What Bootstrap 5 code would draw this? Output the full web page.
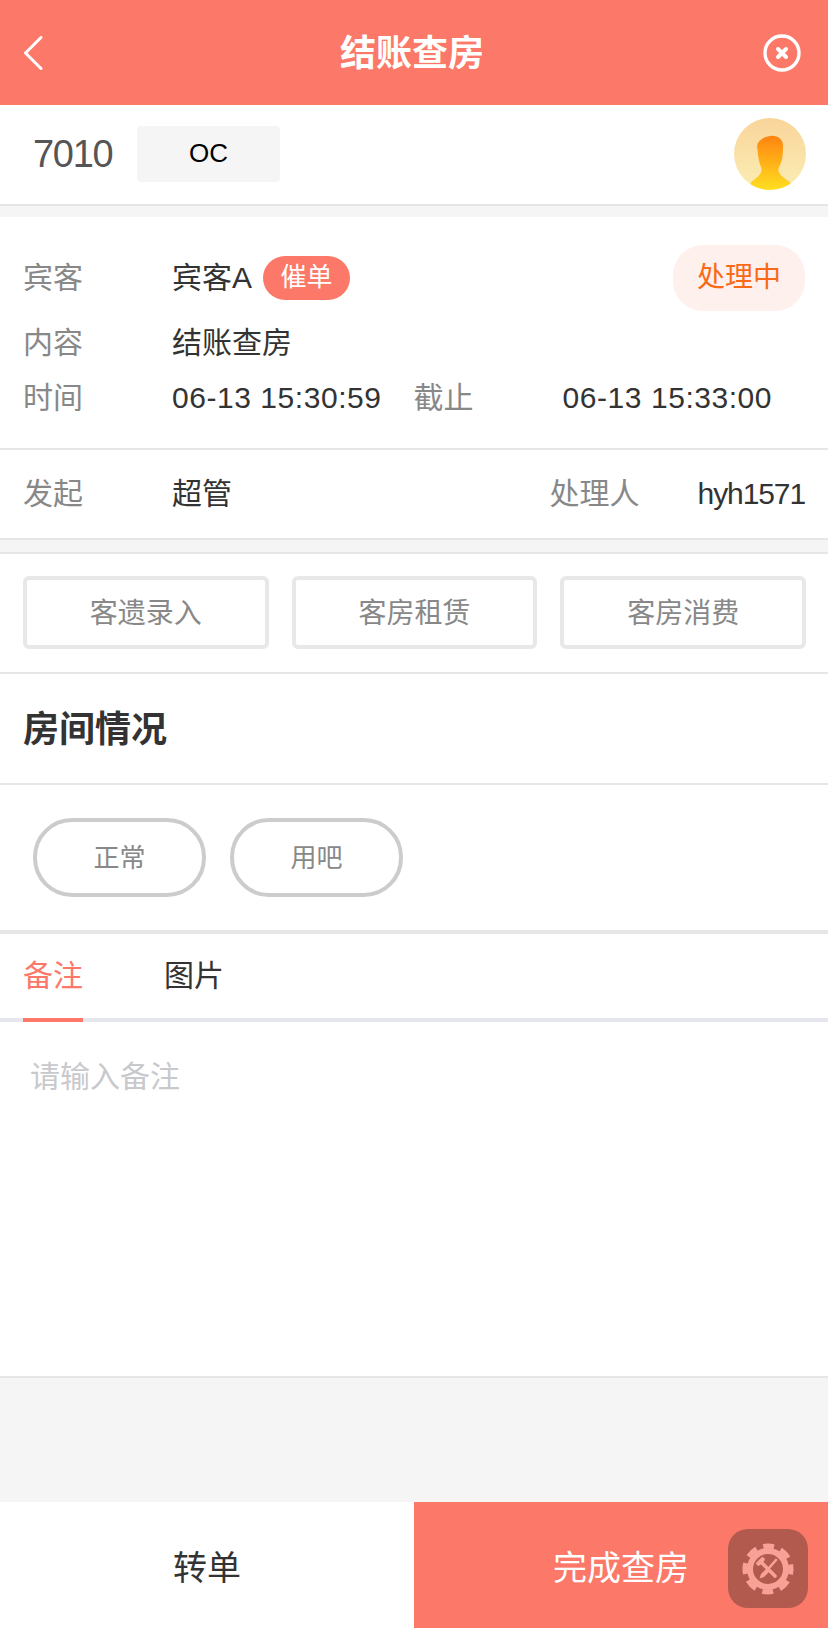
<!DOCTYPE html>
<html lang="zh-CN">

<head>
  <meta charset="UTF-8" />
  <meta name="viewport" content="width=device-width, initial-scale=1.0" />
  <title>结账查房</title>
  <link href="https://cdn.jsdelivr.net/npm/bootstrap@5.3.3/dist/css/bootstrap.min.css" rel="stylesheet">
  <style>
    body {
      font-family: "Liberation Sans", "Noto Sans CJK SC", sans-serif;
      background-color: #f5f5f5;
      color: #333;
      font-size: 30px;
      line-height: 1.2;
    }

    .page {
      height: 1628px;
    }

    .top-bar {
      height: 105px;
      background-color: #fc7969;
      padding: 0 27px 0 23px;
    }

    .top-side {
      width: 60px;
    }

    .top-title {
      font-size: 36px;
      font-weight: 700;
      margin-top: 3px;
    }

    .room-row {
      height: 101px;
      padding: 0 22px 1px 33px;
      border-bottom: 2px solid #e6e6e6;
      margin-bottom: 11px;
    }

    .room-no {
      font-size: 38px;
      letter-spacing: -1.3px;
      color: #555;
      width: 104px;
      margin-top: 2px;
    }

    .room-state {
      width: 143px;
      height: 56px;
      background-color: #f5f5f5;
      border-radius: 4px;
      font-size: 26px;
      color: #000;
    }

    .info-top {
      height: 233px;
      padding: 28px 23px 0;
      border-bottom: 2px solid #e6e6e6;
    }

    .info-line {
      display: flex;
      align-items: center;
    }

    .line-content {
      margin-top: 14px;
    }

    .line-time {
      margin-top: 19px;
    }

    .info-label {
      color: #888;
      width: 149px;
      flex-shrink: 0;
    }

    .time-text {
      letter-spacing: .55px;
    }

    .deadline-label {
      margin-left: 32px;
    }

    .handler-label {
      color: #888;
      margin-left: auto;
      margin-right: 58px;
    }

    .handler-name {
      letter-spacing: -1.1px;
    }

    .tag-urge {
      width: 87px;
      height: 44px;
      margin-left: 11px;
      background-color: #fc7969;
      border-radius: 22px;
      font-size: 26px;
    }

    .tag-status {
      width: 132px;
      height: 66px;
      background-color: #fef0ed;
      border-radius: 30px;
      color: #f96a18;
      font-size: 28px;
    }

    .info-bottom {
      height: 90px;
      padding: 0 23px;
      border-bottom: 2px solid #e6e6e6;
      margin-bottom: 12px;
    }

    .action-row {
      height: 122px;
      padding: 22px 22px 0 23px;
      border-top: 2px solid #e6e6e6;
      border-bottom: 2px solid #e6e6e6;
      gap: 23px;
    }

    .action-btn {
      flex: 1;
      height: 73px;
      padding-top: 3px;
      border: 4px solid #e8e8e8;
      border-radius: 6px;
      color: #888;
      font-size: 28px;
      background-color: #fff;
    }

    .section-title {
      height: 111px;
      padding: 3px 23px 0;
      border-bottom: 2px solid #e6e6e6;
      font-size: 36px;
      font-weight: 700;
    }

    .pill-row {
      height: 149px;
      padding: 33px 33px 0;
      gap: 24px;
      border-bottom: 4px solid #e6e6e6;
    }

    .pill-btn {
      width: 173px;
      height: 79px;
      padding-top: 2px;
      border: 4px solid #ccc;
      border-radius: 39px;
      color: #888;
      font-size: 26px;
      background-color: #fff;
    }

    .tab-row {
      height: 88px;
      padding: 0 23px;
      border-bottom: 4px solid #e6e6ee;
      gap: 81px;
    }

    .tab-item {
      padding-top: 24px;
      height: 88px;
      color: #333;
    }

    .tab-on {
      color: #fc7969;
      border-bottom: 4px solid #fc7969;
      width: 60px;
    }

    .note-box {
      height: 356px;
      border-bottom: 2px solid #e6e6e6;
    }

    .note-box textarea {
      height: 100%;
      padding: 37px 30px;
      font-size: 30px;
      line-height: 1.2;
      resize: none;
      font-family: inherit;
    }

    .note-box textarea::placeholder {
      color: #c8c9cc;
    }

    .foot-bar {
      height: 126px;
    }

    .foot-btn {
      flex: 1;
      font-size: 34px;
      padding-top: 7px;
    }

    .foot-done {
      background-color: #fc7969;
    }

    .float-tool {
      right: 20px;
      bottom: 20px;
      width: 80px;
      height: 79px;
      border-radius: 20px;
      background-color: #b25a4d;
    }
  </style>
</head>

<body>
  <div class="page d-flex flex-column">
    <!-- header -->
    <div class="top-bar d-flex align-items-center justify-content-between text-white flex-shrink-0">
      <div class="top-side d-flex">
        <svg width="20" height="34" viewBox="0 0 20 34">
          <path d="M18 1.5 2.5 17 18 32.5" fill="none" stroke="#fff" stroke-width="3" stroke-linecap="round" stroke-linejoin="round" />
        </svg>
      </div>
      <div class="top-title">结账查房</div>
      <div class="top-side d-flex justify-content-end">
        <svg width="38" height="38" viewBox="0 0 38 38">
          <circle cx="19" cy="19" r="17" fill="none" stroke="#fff" stroke-width="3.4" />
          <path d="M15 15 23 23M23 15 15 23" fill="none" stroke="#fff" stroke-width="4" stroke-linecap="round" />
        </svg>
      </div>
    </div>

    <!-- room -->
    <div class="room-row bg-white d-flex align-items-center flex-shrink-0">
      <div class="room-no">7010</div>
      <div class="room-state d-flex align-items-center justify-content-center">OC</div>
      <svg class="ms-auto" width="72" height="72" viewBox="0 0 72 72">
        <defs>
          <linearGradient id="avatarBg" x1="0" y1="0" x2="0" y2="1">
            <stop offset="0" stop-color="#f9d49a" />
            <stop offset="1" stop-color="#fbeeb4" />
          </linearGradient>
          <linearGradient id="avatarFg" x1="0" y1="0" x2="0" y2="1">
            <stop offset="0" stop-color="#ff8410" />
            <stop offset="1" stop-color="#ffdf20" />
          </linearGradient>
          <clipPath id="avatarClip">
            <circle cx="36" cy="36" r="36" />
          </clipPath>
        </defs>
        <circle cx="36" cy="36" r="36" fill="url(#avatarBg)" />
        <path clip-path="url(#avatarClip)" d="M23 28C24 22 30 19 36 18 44 17 50 22 49 30 49 38 48 44 45 49 43 54 46 58 56 64L58 72H15L17 64C26 58 29 54 27 49 24 42 24 34 23 28Z" fill="url(#avatarFg)" />
      </svg>
    </div>

    <!-- order info -->
    <div class="info-top bg-white flex-shrink-0">
      <div class="info-line">
        <div class="info-label">宾客</div>
        <div>宾客A</div>
        <div class="tag-urge text-white d-flex align-items-center justify-content-center">催单</div>
        <div class="tag-status ms-auto d-flex align-items-center justify-content-center">处理中</div>
      </div>
      <div class="info-line line-content">
        <div class="info-label">内容</div>
        <div>结账查房</div>
      </div>
      <div class="info-line line-time">
        <div class="info-label">时间</div>
        <div class="time-text">06-13 15:30:59</div>
        <div class="info-label deadline-label">截止</div>
        <div class="time-text">06-13 15:33:00</div>
      </div>
    </div>
    <div class="info-bottom bg-white d-flex align-items-center flex-shrink-0">
      <div class="info-label">发起</div>
      <div>超管</div>
      <div class="handler-label">处理人</div>
      <div class="handler-name">hyh1571</div>
    </div>

    <!-- actions -->
    <div class="action-row bg-white d-flex flex-shrink-0">
      <div class="action-btn d-flex align-items-center justify-content-center">客遗录入</div>
      <div class="action-btn d-flex align-items-center justify-content-center">客房租赁</div>
      <div class="action-btn d-flex align-items-center justify-content-center">客房消费</div>
    </div>

    <div class="section-title bg-white d-flex align-items-center flex-shrink-0">房间情况</div>

    <div class="pill-row bg-white d-flex flex-shrink-0">
      <div class="pill-btn d-flex align-items-center justify-content-center">正常</div>
      <div class="pill-btn d-flex align-items-center justify-content-center">用吧</div>
    </div>

    <!-- tabs -->
    <div class="tab-row bg-white d-flex flex-shrink-0">
      <div class="tab-item tab-on">备注</div>
      <div class="tab-item">图片</div>
    </div>

    <div class="note-box bg-white flex-shrink-0">
      <textarea class="form-control border-0 rounded-0 shadow-none" placeholder="请输入备注"></textarea>
    </div>

    <div class="flex-grow-1"></div>

    <!-- footer -->
    <div class="foot-bar d-flex position-relative flex-shrink-0">
      <div class="foot-btn bg-white d-flex align-items-center justify-content-center">转单</div>
      <div class="foot-btn foot-done text-white d-flex align-items-center justify-content-center">完成查房</div>
      <div class="float-tool position-absolute d-flex align-items-center justify-content-center">
        <svg width="52" height="52" viewBox="0 0 52 52">
          <circle cx="26" cy="26" r="23" fill="none" stroke="#f8a297" stroke-width="5" stroke-dasharray="11 7.06" stroke-dashoffset="5.5" />
          <circle cx="26" cy="26" r="18" fill="none" stroke="#f8a297" stroke-width="6" />
          <path d="M20 20 33 33" fill="none" stroke="#f8a297" stroke-width="3.6" stroke-linecap="round" />
          <path d="M16.5 20.5 20.5 16.5" fill="none" stroke="#f8a297" stroke-width="4.5" stroke-linecap="round" />
          <path d="M34 17 27 25" fill="none" stroke="#f8a297" stroke-width="2.6" stroke-linecap="round" />
          <path d="M26 24 19 31 17.5 35.5 22 34 29 27Z" fill="#f8a297" />
        </svg>
      </div>
    </div>
  </div>
  <script src="https://cdn.jsdelivr.net/npm/bootstrap@5.3.3/dist/js/bootstrap.bundle.min.js"></script>
</body>

</html>
